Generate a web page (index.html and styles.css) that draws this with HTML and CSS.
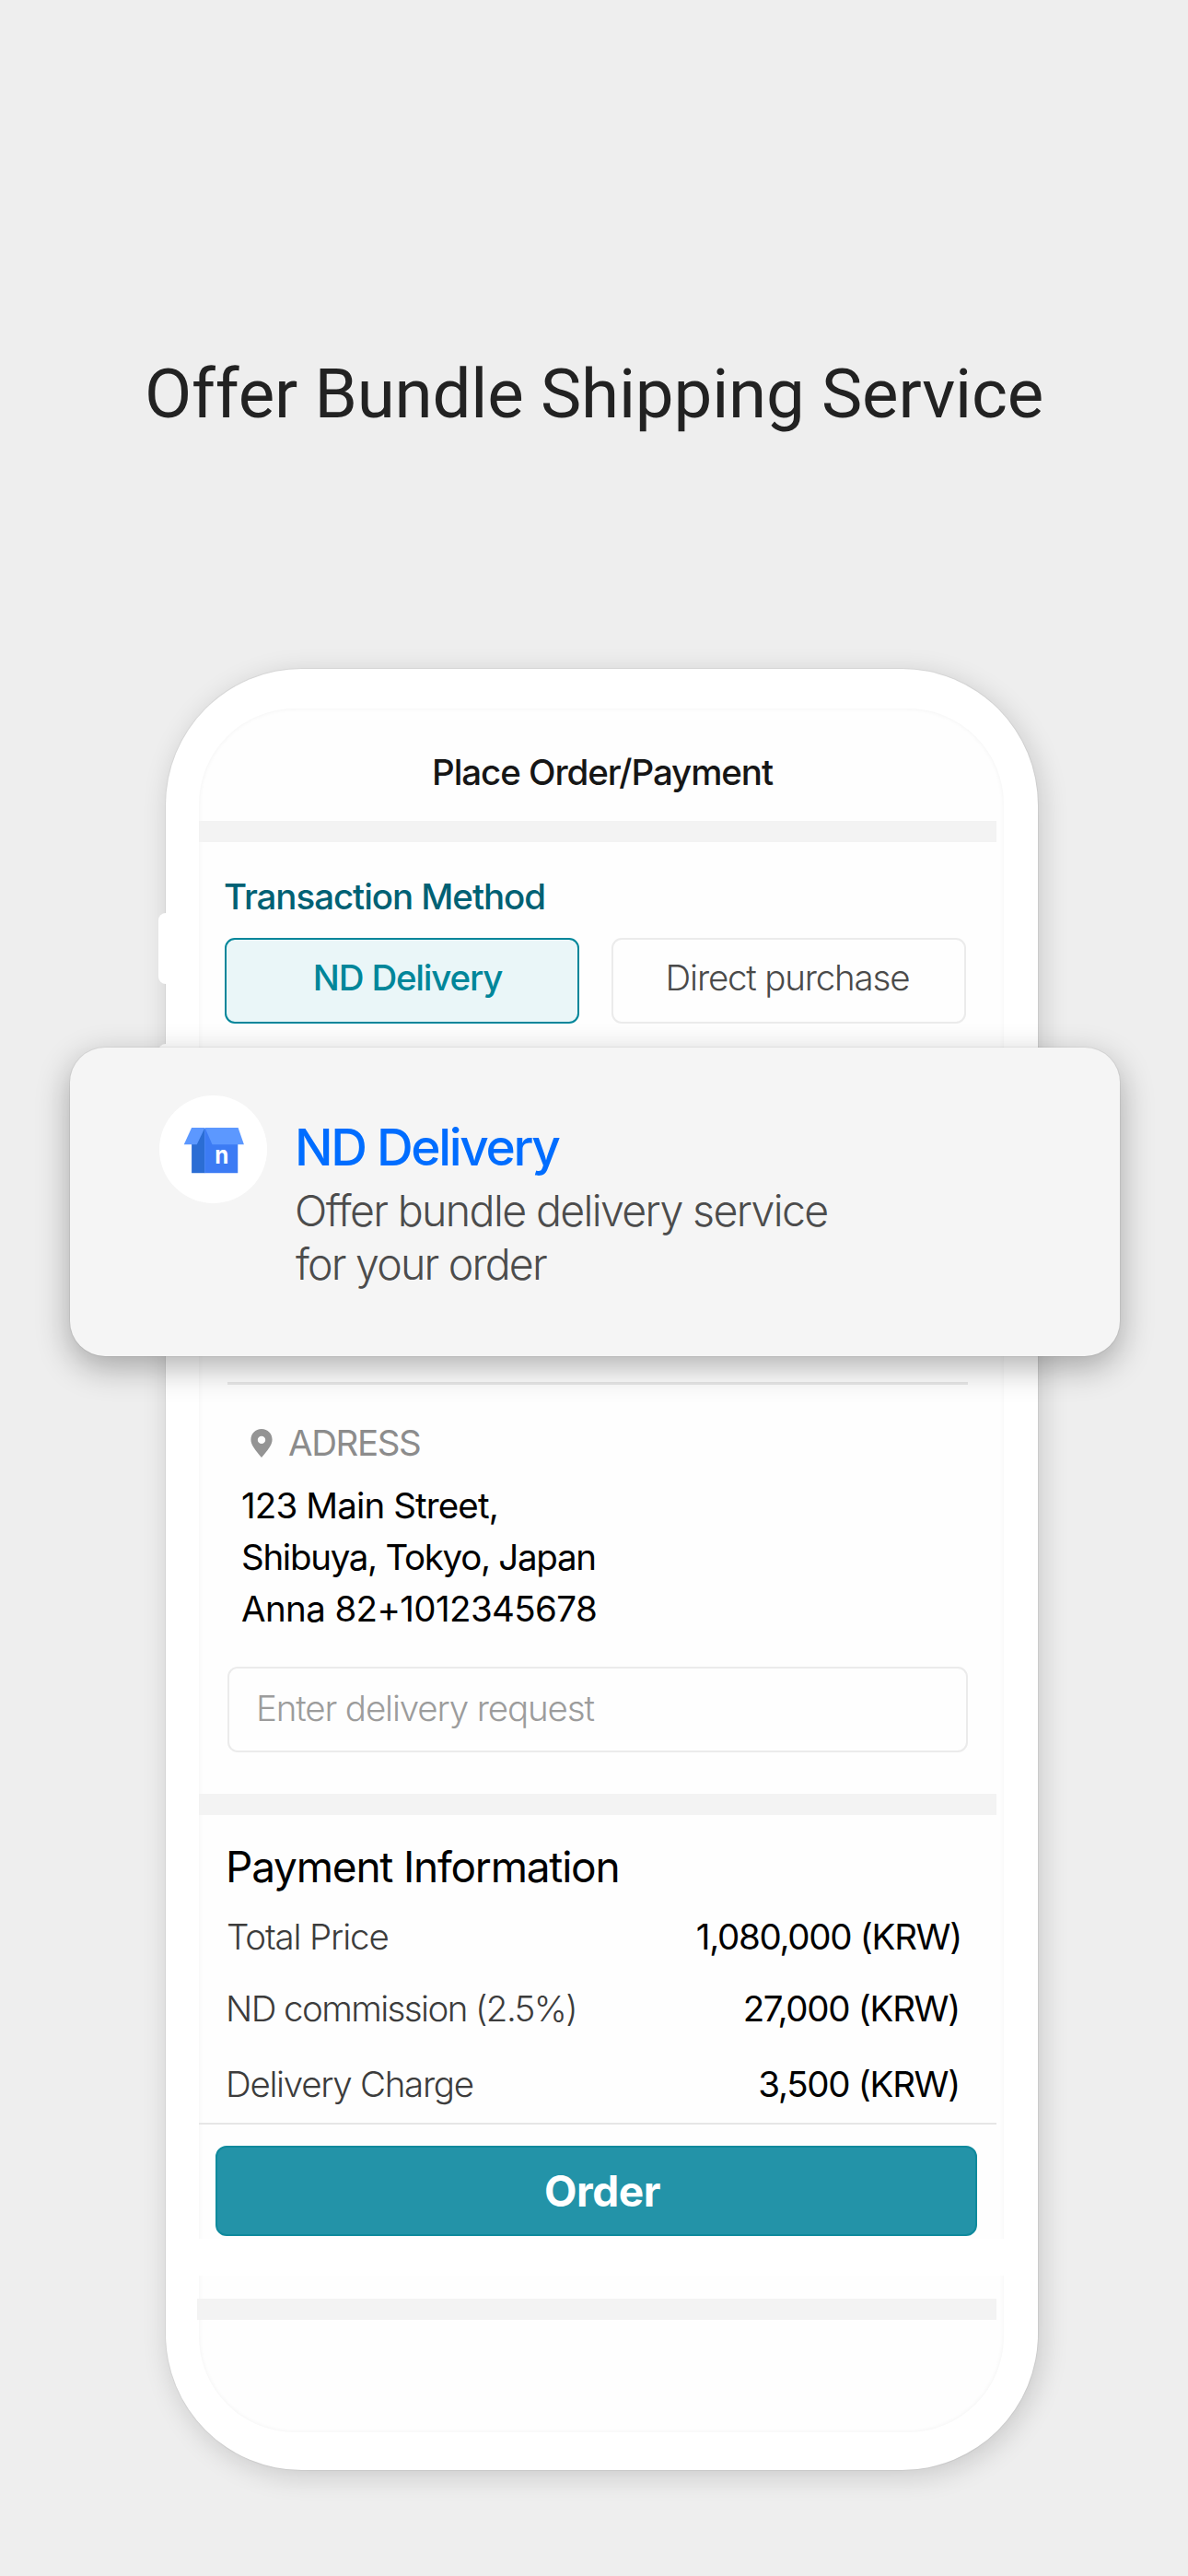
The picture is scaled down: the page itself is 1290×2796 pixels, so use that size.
FILE: index.html
```html
<!DOCTYPE html>
<html lang="en">
<head>
<meta charset="utf-8">
<title>Offer Bundle Shipping Service</title>
<link rel="stylesheet" href="styles.css">
</head>
<body>
<main class="page">
  <h1 class="headline">Offer Bundle Shipping Service</h1>

  <div class="phone">
    <span class="side-key side-key-top"></span>
    <span class="side-key side-key-bottom"></span>

    <div class="screen">
      <header class="topbar">Place Order/Payment</header>
      <div class="band"></div>

      <section class="method">
        <h2 class="method-title">Transaction Method</h2>
        <div class="options">
          <div class="option option-active">ND Delivery</div>
          <div class="option option-plain">Direct purchase</div>
        </div>
      </section>

      <section class="address">
        <div class="address-label">
          <svg class="pin" viewBox="0 0 24 31"><path fill="#949494" fill-rule="evenodd" d="M12 0C5.2 0 .4 5.2.4 11.6.4 17.5 5.500 23.500 12 31 18.500 23.500 23.600 17.500 23.600 11.600 23.600 5.200 18.800 0 12 0ZM12 7.700a4.200 4.200 0 1 1 0 8.400 4.200 4.200 0 0 1 0-8.400Z"/></svg>
          <span>ADRESS</span>
        </div>
        <p class="address-lines">
          <span class="line-street">123 Main Street,</span>
          <span class="line-city">Shibuya, Tokyo, Japan</span>
          <span class="line-contact">Anna 82+1012345678</span>
        </p>
        <div class="request">Enter delivery request</div>
      </section>
      <div class="band"></div>

      <section class="payment">
        <h2 class="payment-title">Payment Information</h2>
        <div class="row row-total"><span class="name">Total Price</span><span class="amount">1,080,000 (KRW)</span></div>
        <div class="row row-fee"><span class="name">ND commission (2.5%)</span><span class="amount">27,000 (KRW)</span></div>
        <div class="row row-charge"><span class="name">Delivery Charge</span><span class="amount">3,500 (KRW)</span></div>
      </section>

      <div class="action">
        <div class="order">Order</div>
      </div>
      <div class="spacer"></div>
      <div class="band band-last"></div>
    </div>

    <aside class="card">
      <div class="badge">
        <svg class="box" viewBox="10 27 350 350">
          <rect x="115" y="134" width="43" height="145" fill="#2b6dd4"/>
          <rect x="157" y="134" width="108" height="145" fill="#3c7bf4"/>
          <path d="M115 132H158L132 186H90Z" fill="#5c98ff"/>
          <path d="M158 132H266L285 186H182Z" fill="#5c98ff"/>
          <text class="box-mark" x="190" y="248" textLength="45" lengthAdjust="spacingAndGlyphs">n</text>
        </svg>
      </div>
      <div class="card-text">
        <h3 class="card-title">ND Delivery</h3>
        <p class="card-desc"><span class="desc-first">Offer bundle delivery service</span><span class="desc-second">for your order</span></p>
      </div>
    </aside>
  </div>
</main>
</body>
</html>
```
FILE: styles.css
```css
* { box-sizing: border-box; }
body { margin: 0; background: #eee; font-family: Inter, "Liberation Sans", sans-serif; }
h1, h2, h3, p { margin: 0; font-weight: 400; }

.page { width: 1290px; height: 2796px; padding-top: 383px; background: #eee; overflow: hidden; }
.headline { padding-left: 157px; height: 90px; line-height: 90px; font-family: Roboto, sans-serif; font-size: 74.5px; letter-spacing: -.17px; color: #222; white-space: nowrap; }

.phone { position: relative; width: 947px; height: 1955px; margin: 253px 0 0 180px; padding: 43px 37px 41px 36px; border-radius: 148px; background: #fff; box-shadow: 0 0 0 1px rgba(0,0,0,.05), 4px 6px 30px rgba(0,0,0,.16); }
.side-key { position: absolute; left: -8px; width: 20px; border-radius: 8px; background: #fff; }
.side-key-top { top: 265px; height: 77px; }
.side-key-bottom { top: 407px; height: 77px; }

.screen { height: 1871px; border-radius: 104px; background: #fefefe; box-shadow: inset 0 0 5px rgba(0,0,0,.055); font-size: 38.5px; line-height: 48px; white-space: nowrap; }
.topbar { height: 122px; padding: 45px 0 0 253px; font-weight: 500; letter-spacing: -1.07px; color: #161616; }
.band { width: 866px; height: 23px; background: #f3f3f3; }

.method { height: 586px; padding: 35px 0 0 28px; }
.method-title { margin-left: -1px; font-size: 38.5px; font-weight: 500; letter-spacing: -1.06px; color: #006174; }
.options { display: flex; gap: 35px; margin-top: 21px; }
.option { display: flex; align-items: center; justify-content: center; width: 385px; height: 93px; padding-bottom: 7px; border: 2px solid #ebebeb; border-radius: 11px; font-weight: 300; letter-spacing: -1.19px; color: #4a4a4a; }
.option-plain { padding-right: 3px; }
.option-active { padding-left: 12px; border-color: #00869a; background: #eaf6f8; font-weight: 500; letter-spacing: -1.21px; color: #00869a; }

.address { width: 835px; height: 447px; padding-left: 31px; }
.address::before { content: ""; display: block; height: 3px; background: #e8e8e8; }
.address-label { display: flex; align-items: center; gap: 17px; margin: 39px 0 0 25px; letter-spacing: -1.4px; color: #8c8c8c; }
.pin { width: 24px; height: 31px; }
.address-lines { display: flex; flex-direction: column; margin: 16px 0 0 15px; line-height: 56px; color: #000; }
.line-street { letter-spacing: -.87px; }
.line-city { letter-spacing: -1.3px; }
.line-contact { letter-spacing: -.62px; }
.request { display: flex; align-items: center; height: 93px; margin-top: 35px; padding: 0 0 3px 29px; border: 2px solid #ebebeb; border-radius: 11px; font-weight: 300; letter-spacing: -1.14px; color: #9c9c9c; }

.payment { width: 866px; height: 336px; padding: 28px 40px 0 29px; border-bottom: 2px solid #e6e6e6; }
.payment-title { font-size: 46px; line-height: 56px; letter-spacing: -1.22px; color: #000; }
.row { display: flex; justify-content: space-between; }
.row-total { margin-top: 24px; }
.row-total .amount { margin-right: -2px; }
.row-total .name { margin-left: 1px; letter-spacing: -1.15px; }
.row-fee { margin-top: 30px; }
.row-fee .name { letter-spacing: -1.59px; }
.row-charge { margin-top: 34px; }
.name { font-weight: 300; letter-spacing: -1.3px; color: #3c3c3c; }
.amount { letter-spacing: -1.3px; color: #000; }

.action { width: 866px; height: 124px; padding: 23px 21px 0 18px; }
.order { display: flex; align-items: center; justify-content: center; height: 98px; padding-left: 13px; border: 2px solid #0f8a9d; border-radius: 12px; background: #2393a8; font-size: 46px; font-weight: 700; letter-spacing: -.4px; color: #fff; }
.spacer { height: 40px; background: #fff; }
.band-last { width: 868px; margin: 25px 0 0 -2px; }

.card { position: absolute; left: -104px; top: 411px; display: flex; width: 1140px; height: 335px; padding: 52px 0 0 97px; border-radius: 38px; background: #f5f5f5; box-shadow: 0 0 0 1px rgba(0,0,0,.05), 0 12px 36px rgba(0,0,0,.31); white-space: nowrap; }
.badge { width: 117px; height: 117px; border-radius: 50%; background: #fff; }
.box { display: block; width: 117px; height: 117px; }
.box-mark { font: 700 78px Inter, sans-serif; fill: #fff; }
.card-text { margin: 24px 0 0 30px; }
.card-title { font-size: 55px; line-height: 64px; font-weight: 500; letter-spacing: -2.34px; color: #006dff; }
.card-desc { display: flex; flex-direction: column; margin: 9px 0 0 0; font-size: 46.5px; line-height: 57.6px; font-weight: 300; color: #4c4c4c; }
.desc-first { letter-spacing: -1.64px; }
.desc-second { margin-left: 1px; letter-spacing: -1.8px; }
```
